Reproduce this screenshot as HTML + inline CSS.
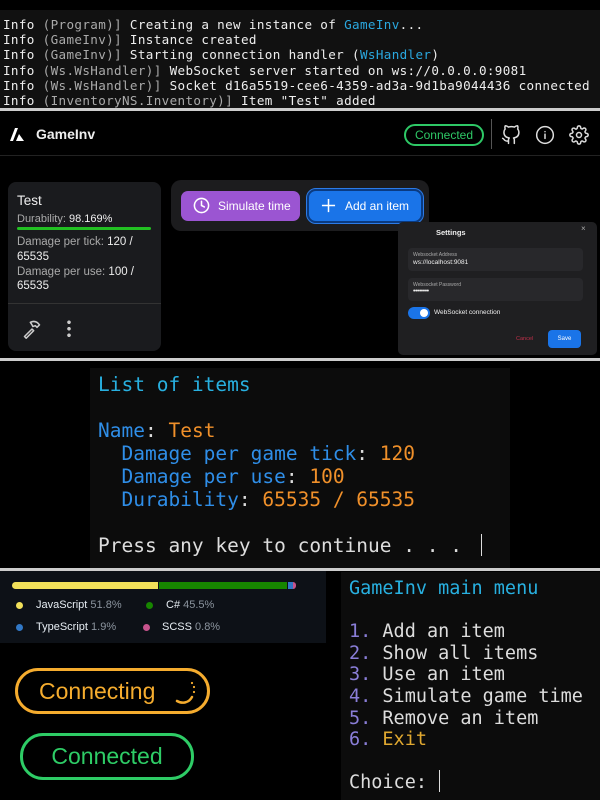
<!DOCTYPE html>
<html><head><meta charset="utf-8"><style>
*{margin:0;padding:0;box-sizing:border-box}
body{width:600px;height:800px;background:#000;position:relative;overflow:hidden;font-family:"Liberation Sans",sans-serif}
.abs{position:absolute}
.mono{font-family:"DejaVu Sans Mono","Liberation Mono",monospace;white-space:pre}
#t1{left:0;top:10px;width:600px;height:98px;background:#111;color:#eee;font-size:12.6px;line-height:15.2px;padding:7px 0 0 3px;letter-spacing:0.35px}
.dim{color:#aaa}.cy{color:#2aa8e0}
.sep{left:0;width:600px;height:3px;background:#ccc}
#hdr{left:0;top:111px;width:600px;height:45px;border-bottom:1px solid #222}
.card{background:#1a1b1e;border-radius:8px}
#t2{left:90px;top:368px;width:420px;height:200px;background:#0c0c0c;font-size:19.5px;line-height:23px;padding:5px 0 0 8px}
.b{color:#2f8ee8}.o{color:#f0902a}.w{color:#ddd}.c2{color:#28b0e0}
#t3{left:341px;top:572px;width:259px;height:228px;background:#0c0c0c;font-size:18.5px;line-height:21.6px;padding:6px 0 0 8px;color:#ddd}
.p{color:#8a7ed8}.y{color:#e0a830}
</style></head><body>
<div class="abs mono" id="t1">Info <span class="dim">(Program)]</span> Creating a new instance of <span class="cy">GameInv</span>...
Info <span class="dim">(GameInv)]</span> Instance created
Info <span class="dim">(GameInv)]</span> Starting connection handler (<span class="cy">WsHandler</span>)
Info <span class="dim">(Ws.WsHandler)]</span> WebSocket server started on ws://0.0.0.0:9081
Info <span class="dim">(Ws.WsHandler)]</span> Socket d16a5519-cee6-4359-ad3a-9d1ba9044436 connected
Info <span class="dim">(InventoryNS.Inventory)]</span> Item "Test" added</div>
<div class="abs sep" style="top:108px"></div>
<div class="abs" id="hdr">
 <svg class="abs" style="left:10px;top:17px" width="16" height="13" viewBox="0 0 16 13"><path d="M5 0h3L3 13H0z M9 6l5 7H6z" fill="#fff"/></svg>
 <div class="abs" style="left:36px;top:15px;color:#eee;font-size:14px;font-weight:bold">GameInv</div>
 <div class="abs" style="left:404px;top:13px;width:80px;height:22px;border:2px solid #2ec866;border-radius:11px;color:#2ec866;font-size:12px;text-align:center;line-height:18px">Connected</div>
 <div class="abs" style="left:491px;top:8px;width:1px;height:30px;background:#555"></div>
 <svg class="abs" style="left:501px;top:14px" width="20" height="20" viewBox="0 0 24 24" fill="none" stroke="#ddd" stroke-width="1.8" stroke-linecap="round" stroke-linejoin="round"><path d="M9 19c-5 1.5-5-2.5-7-3m14 6v-3.87a3.37 3.37 0 0 0-.94-2.610c3.14-.35 6.440-1.540 6.440-7A5.440 5.440 0 0 0 20 4.770 5.070 5.070 0 0 0 19.910 1S18.730.650 16 2.480a13.380 13.380 0 0 0-7 0C6.270.650 5.090 1 5.090 1A5.070 5.070 0 0 0 5 4.770a5.440 5.440 0 0 0-1.500 3.780c0 5.420 3.300 6.610 6.440 7A3.370 3.370 0 0 0 9 18.130V22"/></svg>
 <svg class="abs" style="left:535px;top:14px" width="20" height="20" viewBox="0 0 24 24" fill="none" stroke="#ddd" stroke-width="1.8" stroke-linecap="round"><circle cx="12" cy="12" r="10"/><path d="M12 16v-5M12 8h.01"/></svg>
 <svg class="abs" style="left:569px;top:14px" width="20" height="20" viewBox="0 0 24 24" fill="none" stroke="#ddd" stroke-width="1.8"><circle cx="12" cy="12" r="3"/><path d="M19.4 15a1.65 1.65 0 0 0 .33 1.82l.06.06a2 2 0 1 1-2.83 2.83l-.06-.06a1.65 1.65 0 0 0-1.82-.33 1.65 1.65 0 0 0-1 1.51V21a2 2 0 1 1-4 0v-.09A1.65 1.65 0 0 0 9 19.4a1.65 1.65 0 0 0-1.82.33l-.06.06a2 2 0 1 1-2.830-2.830l.06-.06A1.65 1.65 0 0 0 4.68 15a1.65 1.65 0 0 0-1.51-1H3a2 2 0 1 1 0-4h.09A1.65 1.65 0 0 0 4.6 9a1.65 1.65 0 0 0-.33-1.82l-.06-.06a2 2 0 1 1 2.83-2.83l.06.06A1.65 1.65 0 0 0 9 4.68a1.65 1.65 0 0 0 1-1.51V3a2 2 0 1 1 4 0v.09a1.65 1.65 0 0 0 1 1.51 1.65 1.65 0 0 0 1.82-.33l.06-.06a2 2 0 1 1 2.83 2.83l-.06.06A1.65 1.65 0 0 0 19.4 9a1.65 1.65 0 0 0 1.51 1H21a2 2 0 1 1 0 4h-.09a1.65 1.65 0 0 0-1.51 1z"/></svg>
</div>
<!-- item card -->
<div class="abs card" style="left:8px;top:182px;width:153px;height:169px">
 <div class="abs" style="left:9px;top:11px;color:#eee;font-size:13.5px">Test</div>
 <div class="abs" style="left:9px;top:31px;color:#aaa;font-size:11px">Durability: <span style="color:#eee">98.169%</span></div>
 <div class="abs" style="left:9px;top:45px;width:134px;height:3px;background:#22c022;border-radius:2px"></div>
 <div class="abs" style="left:9px;top:53px;color:#aaa;font-size:11.5px;line-height:14.8px;width:130px">Damage per tick: <span style="color:#eee">120 / 65535</span><br>Damage per use: <span style="color:#eee">100 / 65535</span></div>
 <div class="abs" style="left:0;top:121px;width:153px;height:1px;background:#333"></div>
 <svg class="abs" style="left:14px;top:137px" width="20" height="20" viewBox="0 0 24 24" fill="none" stroke="#ccc" stroke-width="1.8" stroke-linejoin="round"><path d="M3 21l9-9 2 2-9 9z M10 4c4-2 8-1 11 3l-3 3-2-2-3 1-1-2z"/></svg>
 <div class="abs" style="left:59px;top:137px;width:4px;height:18px;background:radial-gradient(circle,#ccc 1.6px,transparent 2px) 0 0/4px 6.5px"></div>
</div>
<!-- toolbar -->
<div class="abs card" style="left:171px;top:180px;width:258px;height:51px;background:#1c1c1e;border-radius:10px">
 <div class="abs" style="left:10px;top:11px;width:119px;height:30px;background:#9b55d2;border-radius:7px;color:#fff;font-size:12px;line-height:30px;padding-left:37px">Simulate time</div>
 <svg class="abs" style="left:22px;top:17px" width="17" height="17" viewBox="0 0 24 24" fill="none" stroke="#fff" stroke-width="2.2" stroke-linecap="round"><circle cx="12" cy="12" r="10"/><path d="M12 6v6l4 2"/></svg>
 <div class="abs" style="left:136px;top:9px;width:116px;height:34px;background:#1a74e8;border-radius:9px;border:2px solid #0a3a80;outline:1px solid #2b7be8;color:#fff;font-size:12px;line-height:30px;padding-left:36px">Add an item</div>
 <svg class="abs" style="left:150px;top:18px" width="15" height="15" viewBox="0 0 16 16" stroke="#fff" stroke-width="1.6"><path d="M8 1v14M1 8h14"/></svg>
</div>
<!-- settings modal -->
<div class="abs card" style="left:398px;top:222px;width:199px;height:133px;background:#1f1f21;border-radius:5px">
 <div class="abs" style="left:183px;top:2px;color:#aaa;font-size:8px">×</div>
 <div class="abs" style="left:38px;top:6px;color:#eee;font-size:7.5px;font-weight:bold">Settings</div>
 <div class="abs" style="left:10px;top:26px;width:175px;height:23px;background:#28282b;border-radius:4px"><div style="font-size:5px;color:#aaa;padding:4px 0 0 5px">Websocket Address</div><div style="font-size:6.5px;color:#eee;padding:1px 0 0 5px">ws://localhost:9081</div></div>
 <div class="abs" style="left:10px;top:56px;width:175px;height:23px;background:#28282b;border-radius:4px"><div style="font-size:5px;color:#aaa;padding:4px 0 0 5px">Websocket Password</div><div style="font-size:7px;color:#eee;padding:0 0 0 5px;letter-spacing:-0.5px">••••••••</div></div>
 <div class="abs" style="left:10px;top:85px;width:22px;height:12px;background:#1a74e8;border-radius:6px"><div style="position:absolute;right:2px;top:2px;width:8px;height:8px;border-radius:50%;background:#fff"></div></div>
 <div class="abs" style="left:36px;top:87px;color:#eee;font-size:6.5px">WebSocket connection</div>
 <div class="abs" style="left:118px;top:114px;color:#c0304a;font-size:5.5px">Cancel</div>
 <div class="abs" style="left:150px;top:108px;width:33px;height:18px;background:#1a74e8;border-radius:4px;color:#fff;font-size:6px;text-align:center;line-height:18px">Save</div>
</div>
<div class="abs sep" style="top:358px"></div>
<div class="abs mono" id="t2"><span class="c2">List of items</span>

<span class="b">Name</span><span class="w">:</span> <span class="o">Test</span>
  <span class="b">Damage per game tick</span><span class="w">:</span> <span class="o">120</span>
  <span class="b">Damage per use</span><span class="w">:</span> <span class="o">100</span>
  <span class="b">Durability</span><span class="w">:</span> <span class="o">65535 / 65535</span>

<span class="w">Press any key to continue . . . </span></div>
<div class="abs" style="left:481px;top:534px;width:1px;height:22px;background:#ddd"></div>
<div class="abs sep" style="top:568px"></div>
<!-- language panel -->
<div class="abs" style="left:0;top:571px;width:326px;height:72px;background:#0d1117"></div>
<div class="abs" style="left:12px;top:582px;width:146px;height:7px;background:#f1e05a;border-radius:4px 0 0 4px"></div>
<div class="abs" style="left:159px;top:582px;width:128px;height:7px;background:#178600"></div>
<div class="abs" style="left:288px;top:582px;width:5px;height:7px;background:#3178c6"></div>
<div class="abs" style="left:293px;top:582px;width:3px;height:7px;background:#c6538c;border-radius:0 4px 4px 0"></div>
<div class="abs" style="left:16px;top:602px;width:7px;height:7px;border-radius:50%;background:#f1e05a"></div>
<div class="abs" style="left:36px;top:599px;font-size:11px;color:#e6edf3">JavaScript <span style="color:#8b949e">51.8%</span></div>
<div class="abs" style="left:146px;top:602px;width:7px;height:7px;border-radius:50%;background:#178600"></div>
<div class="abs" style="left:166px;top:599px;font-size:11px;color:#e6edf3">C# <span style="color:#8b949e">45.5%</span></div>
<div class="abs" style="left:16px;top:624px;width:7px;height:7px;border-radius:50%;background:#3178c6"></div>
<div class="abs" style="left:36px;top:621px;font-size:11px;color:#e6edf3">TypeScript <span style="color:#8b949e">1.9%</span></div>
<div class="abs" style="left:143px;top:624px;width:7px;height:7px;border-radius:50%;background:#c6538c"></div>
<div class="abs" style="left:162px;top:621px;font-size:11px;color:#e6edf3">SCSS <span style="color:#8b949e">0.8%</span></div>
<!-- pills -->
<div class="abs" style="left:15px;top:668px;width:195px;height:46px;border:3px solid #f5ac2e;border-radius:23px;color:#f5ac2e;font-size:23px;line-height:40px;padding-left:21px">Connecting</div>
<svg class="abs" style="left:172px;top:677px" width="30" height="30" viewBox="0 0 30 30" fill="none" stroke="#f5ac2e" stroke-width="2.5" stroke-linecap="round"><path d="M5 24c5 3 12 2 15-4"/><path d="M22 15v0M22 10v0M20 6v0" stroke-width="2.2"/></svg>
<div class="abs" style="left:20px;top:733px;width:174px;height:47px;border:3px solid #2ecc66;border-radius:23px;color:#2ecc66;font-size:23px;line-height:41px;text-align:center">Connected</div>
<!-- main menu -->
<div class="abs mono" id="t3"><span class="c2">GameInv main menu</span>

<span class="p">1.</span> Add an item
<span class="p">2.</span> Show all items
<span class="p">3.</span> Use an item
<span class="p">4.</span> Simulate game time
<span class="p">5.</span> Remove an item
<span class="p">6.</span> <span class="y">Exit</span>

Choice: </div>
<div class="abs" style="left:439px;top:770px;width:1px;height:22px;background:#ddd"></div>
</body></html>
